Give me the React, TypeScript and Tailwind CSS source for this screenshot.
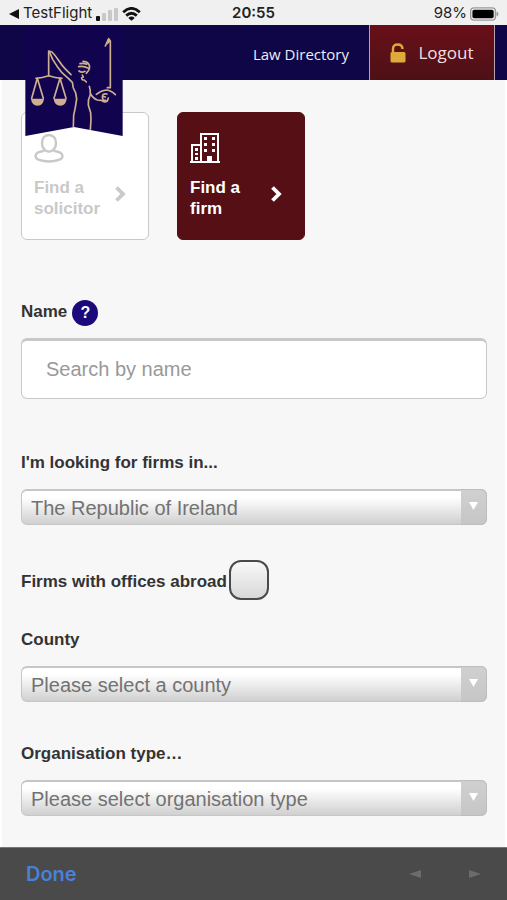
import React, { useState } from "react";

const StatusBar: React.FC = () => (
  <div className="relative flex h-[25px] items-center justify-between bg-[#f0f0f0] px-2 pt-[2px] font-['Inter',sans-serif] text-[15px] text-[#222]">
    <div className="flex items-center gap-1">
      <svg width="11" height="10" viewBox="0 0 11 10" fill="#111" aria-hidden="true">
        <path d="M1 5 11 0v10z" />
      </svg>
      <span>TestFlight</span>
      <svg width="22" height="14" viewBox="0 0 22 14" aria-hidden="true">
        <rect x="0" y="9" width="4" height="5" rx="1" fill="#111" />
        <rect x="6" y="6" width="4" height="8" rx="1" fill="#c8c8c8" />
        <rect x="12" y="3" width="4" height="11" rx="1" fill="#c8c8c8" />
        <rect x="18" y="1" width="4" height="13" rx="1" fill="#c8c8c8" />
      </svg>
      <svg width="19" height="14" viewBox="0 0 19 14" fill="none" stroke="#111" strokeWidth="2.8" aria-hidden="true">
        <path d="M1.2 5.2Q9.5-2.4 17.8 5.2" />
        <path d="M4.2 8.6q5.3-4.8 10.6 0" />
        <path d="M9.5 13.8 6.3 10.9q3.200-2.600 6.400 0z" fill="#111" stroke="none" />
      </svg>
    </div>
    <span className="absolute inset-x-0 text-center font-semibold">20:55</span>
    <div className="flex items-center gap-[3px]">
      <span>98%</span>
      <svg width="29" height="14" viewBox="0 0 30 14" aria-hidden="true">
        <rect x="0.7" y="0.7" width="25.6" height="12.6" rx="3.5" fill="none" stroke="#999" strokeWidth="1.4" />
        <rect x="2.5" y="2.5" width="22" height="9" rx="1.8" fill="#000" />
        <path d="M27.5 4.5q2 .8 2 2.500t-2 2.500z" fill="#999" />
      </svg>
    </div>
  </div>
);

const Logo: React.FC = () => (
  <svg className="absolute top-0 left-[25px] z-10" width="98" height="111" viewBox="32 0 292 333" role="img" aria-label="Law Society">
    <path d="M32 0h292v333l-146-27-146 27z" fill="#12034f" />
    <g fill="none" stroke="#cdb091" strokeWidth="5" strokeLinecap="round" strokeLinejoin="round">
      <path d="M102 152V78l10 3q10 10 19 24 12 18 22 28l16 16" />
      <path d="M104 80l10 23 14 22 13 17 20 18 12 12 3 17 7 15 3 18-4 25-5 24-1 34" />
      <path d="M64 160q18-1 38-8 20 7 40 8" />
      <path d="M68 160 51 220M68 160l18 60M136 160l-18 60M136 160l18 60" />
      <path d="M192 125q15-3 28 4M196 116q10-3 20 2M205 109q12 0 17 8 6 10-1 20l-6 8M193 138q8 6 18 1M203 150l3 6-5 2q0 8 8 7l6 6" />
      <path d="M224 184q4 12 3 25-8 16-6 32l7 22 1 22-2 28" />
      <path d="M228 207q8 14 20 18l12 1q10 8 18 2l3-9M277 207q-14-3-14 9 1 12 10 10M265 214l7 2" />
      <path d="M245 208q15-12 30-13 16 2 27 14M278 188h9V48l-5-7-10 22M277 56l8-9" />
    </g>
    <path d="M49 221h39q-2 20-19 21-18-1-20-21zM117 221h39q-2 20-19 21-18-1-20-21z" fill="#cdb091" />
  </svg>
);

const PersonIcon = () => (
  <svg width="30" height="30" viewBox="0 0 30 30" fill="none" stroke="#c9c9c9" strokeWidth="2.4" aria-hidden="true">
    <path d="M15 2c-4.500 0-7 3.500-7 8 0 3.500 2 6.500 4 7.800 2 1.100 4 1.100 6 0 2-1.300 4-4.300 4-7.800 0-4.500-2.500-8-7-8z" />
    <path d="M10.500 17.800C5 18.500 1.500 20.500 1.500 23.200c0 3 5.500 5.300 13.500 5.300s13.500-2.300 13.500-5.300c0-2.700-3.500-4.700-9-5.400" />
  </svg>
);

const BuildingIcon = () => (
  <svg width="30" height="30" viewBox="0 0 30 30" aria-hidden="true">
    <g fill="none" stroke="#fff" strokeWidth="2">
      <path d="M11 29V1h17v28M2 29V12h9M0 29h30" />
    </g>
    <g fill="#fff">
      <path d="M14 4h3v3h-3zM22 4h3v3h-3zM14 10h3v3h-3zM22 10h3v3h-3zM14 16h3v3h-3zM22 16h3v3h-3z" />
      <path d="M5 15h3v3H5zM5 20h3v2H5zM5 24h3v3H5zM17 23h5v6h-5z" />
    </g>
  </svg>
);

const Chevron = () => (
  <svg width="11" height="16" viewBox="0 0 11 16" fill="none" stroke="currentColor" strokeWidth="3.8" aria-hidden="true">
    <path d="m1.500 1.500 6.500 6.500-6.500 6.500" />
  </svg>
);

interface SelectFieldProps {
  id: string;
  label: string;
  value: string;
}

const SelectField: React.FC<SelectFieldProps> = ({ id, label, value }) => (
  <div className="flex flex-col gap-[14px]">
    <label htmlFor={id} className="text-[17px] leading-6 font-bold">
      {label}
    </label>
    <div className="relative">
      <select
        id={id}
        className="h-9 w-full appearance-none rounded-md border border-t-2 border-[#c6c6c6] bg-linear-to-b from-white from-20% to-[#d0d0d0] pr-8 pl-[9px] text-xl leading-7 text-[#727272]"
      >
        <option>{value}</option>
      </select>
      <span className="pointer-events-none absolute inset-y-0 right-0 flex w-[26px] justify-center rounded-r-md border border-l-0 border-[#bdbdbd] bg-linear-to-b from-[#d0d0d0] to-[#c6c6c6] pt-3">
        <svg width="9" height="8" viewBox="0 0 9 8" fill="#fff" aria-hidden="true">
          <path d="M0 0h9L4.500 8z" />
        </svg>
      </span>
    </div>
  </div>
);

const App: React.FC = () => {
  const [abroad, setAbroad] = useState(false);

  return (
    <div className="flex min-h-screen flex-col bg-white font-['Liberation_Sans',Arial,sans-serif] text-[#333]">
      <StatusBar />

      <header className="relative flex h-[55px] justify-end bg-[#0e0646] pr-3 font-['Open_Sans',sans-serif] text-[#ececf6]">
        <Logo />
        <nav className="flex">
          <a href="#" className="flex items-center px-5 pt-1 text-[15px]">
            Law Directory
          </a>
          <button type="button" className="flex w-[126px] items-center justify-center gap-3 border-x border-[#b8a3b0] bg-linear-to-b from-[#6a0f18] to-[#4d1017] text-[17px] text-[#f3dfe2]">
            <svg width="16" height="20" viewBox="0 0 16 20" fill="none" aria-hidden="true">
              <path d="M3 10V6q0-4.500 4.700-4.500T12.500 6" stroke="#dfaa3c" strokeWidth="2.4" />
              <rect x="0.5" y="9" width="15" height="10.5" rx="1.5" fill="#dfaa3c" />
            </svg>
            Logout
          </button>
        </nav>
      </header>

      <main className="mx-[2px] flex-1 bg-[#f7f7f7] pt-8 pr-[18px] pb-[30px] pl-[19px]">
        <div className="flex gap-7">
          <button type="button" className="flex size-32 flex-col gap-[14px] rounded-md border border-[#c9c9c9] bg-white px-3 pt-5 text-left text-[#c9c9c9]">
            <PersonIcon />
            <span className="flex w-full items-center justify-between pr-[10px] text-[17px] leading-[21px] font-bold">
              <span>
                Find a<br />
                solicitor
              </span>
              <span className="pb-2">
                <Chevron />
              </span>
            </span>
          </button>
          <button type="button" className="flex size-32 flex-col gap-[14px] rounded-md border border-[#561015] bg-[#561015] px-3 pt-5 text-left text-white">
            <BuildingIcon />
            <span className="flex w-full items-center justify-between pr-[10px] text-[17px] leading-[21px] font-bold">
              <span>
                Find a<br />
                firm
              </span>
              <span className="pb-2">
                <Chevron />
              </span>
            </span>
          </button>
        </div>

        <div className="mt-[60px] flex items-start gap-[5px]">
          <label htmlFor="name" className="text-[17px] leading-6 font-bold">
            Name
          </label>
          <button type="button" aria-label="Help" className="size-[26px] rounded-full bg-[#1a0a7c] text-center text-base leading-[22px] font-bold text-white">
            ?
          </button>
        </div>
        <input
          id="name"
          type="text"
          placeholder="Search by name"
          className="mt-3 block h-[61px] w-full rounded-md border border-t-3 border-[#c8c8c8] bg-white px-6 text-xl placeholder:text-[#999]"
        />

        <div className="mt-[52px]">
          <SelectField id="region" label="I'm looking for firms in..." value="The Republic of Ireland" />
        </div>

        <div className="mt-[35px] flex items-center gap-[2px]">
          <label htmlFor="abroad" className="pt-[3px] text-[17px] leading-6 font-bold">
            Firms with offices abroad
          </label>
          <input
            id="abroad"
            type="checkbox"
            checked={abroad}
            onChange={(e) => setAbroad(e.target.checked)}
            className="size-10 appearance-none rounded-xl border-2 border-[#4a4a4a] bg-linear-to-b from-[#f8f8f8] to-[#d8d8d8] checked:to-[#8f8f8f]"
          />
        </div>

        <div className="mt-7 flex flex-col gap-10">
          <SelectField id="county" label="County" value="Please select a county" />
          <SelectField id="organisation" label="Organisation type…" value="Please select organisation type" />
        </div>
      </main>

      <footer className="flex h-[53px] items-center justify-between border-t border-[#777] bg-[#4a4a4a] px-[26px] font-['Inter',sans-serif]">
        <button type="button" className="text-xl font-semibold text-[#4a80d8]">
          Done
        </button>
        <div className="flex gap-12">
          <button type="button" aria-label="Previous">
            <svg width="12" height="8" viewBox="0 0 12 8" fill="#6c6c6c">
              <path d="M0 4 12 0v8z" />
            </svg>
          </button>
          <button type="button" aria-label="Next">
            <svg width="12" height="8" viewBox="0 0 12 8" fill="#6c6c6c">
              <path d="M12 4 0 0v8z" />
            </svg>
          </button>
        </div>
      </footer>
    </div>
  );
};

export default App;
